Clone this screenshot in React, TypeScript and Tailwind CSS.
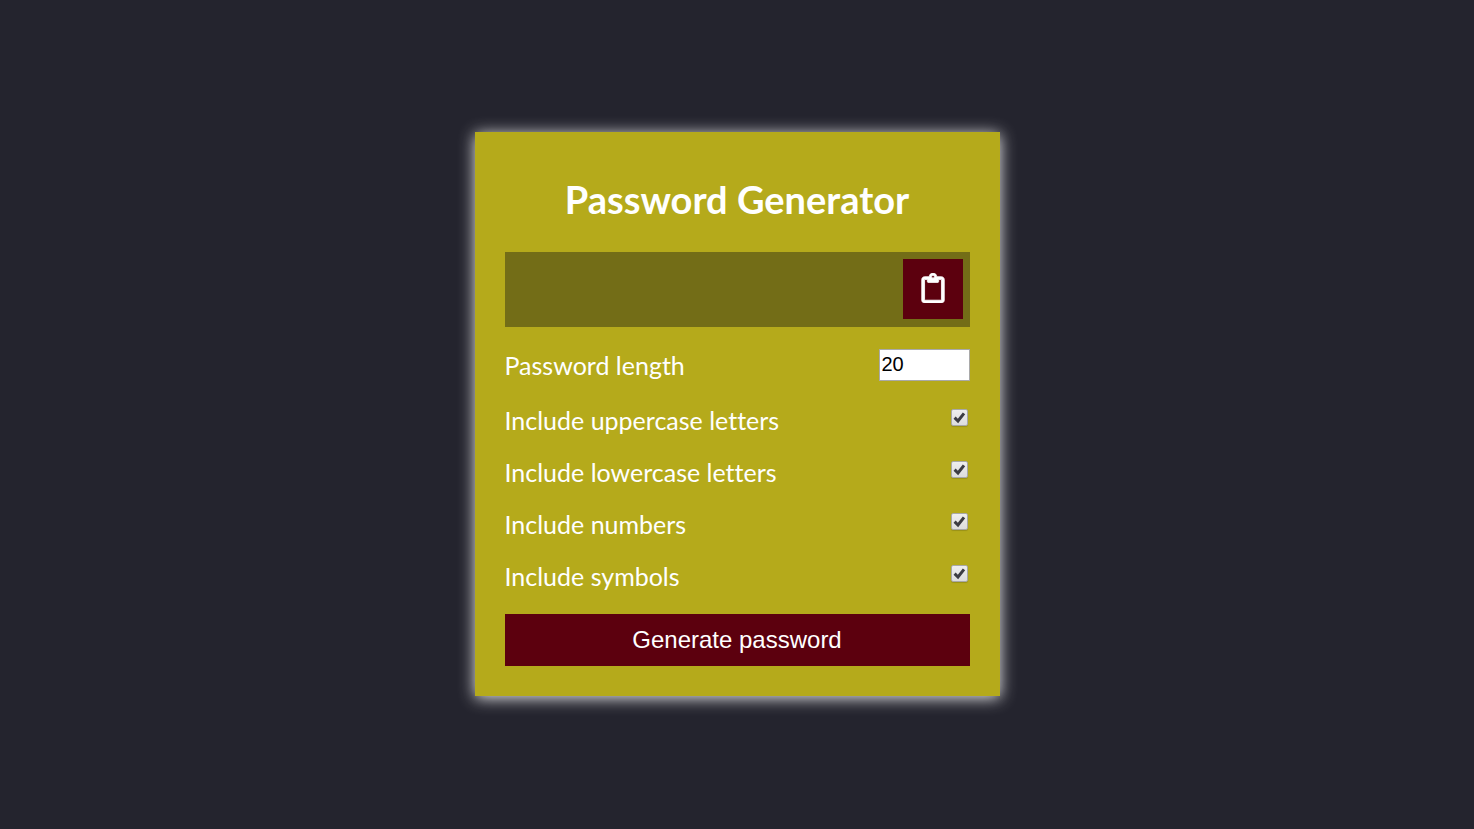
import { useState } from 'react';
import { FaRegClipboard } from 'react-icons/fa';

const options = [
  { id: 'uppercase', label: 'Include uppercase letters', chars: 'ABCDEFGHIJKLMNOPQRSTUVWXYZ' },
  { id: 'lowercase', label: 'Include lowercase letters', chars: 'abcdefghijklmnopqrstuvwxyz' },
  { id: 'numbers', label: 'Include numbers', chars: '0123456789' },
  { id: 'symbols', label: 'Include symbols', chars: '!@#$%^&*(){}[]=<>/,.' },
];

export default function App() {
  const [password, setPassword] = useState('');
  const [length, setLength] = useState(20);
  const [enabled, setEnabled] = useState<Record<string, boolean>>({
    uppercase: true,
    lowercase: true,
    numbers: true,
    symbols: true,
  });

  const generate = () => {
    const pool = options.filter((o) => enabled[o.id]).map((o) => o.chars).join('');
    setPassword(
      pool ? Array.from({ length }, () => pool[Math.floor(Math.random() * pool.length)]).join('') : '',
    );
  };

  return (
    <main className="flex min-h-screen items-center justify-center bg-[#24242e] pb-px font-['Lato','Open_Sans',sans-serif] text-[25px] leading-8 text-white [font-variant-ligatures:none]">
      <section className="w-full max-w-[525px] bg-[#b5aa1b] p-[30px] shadow-[0px_2px_15px_rgba(255,255,255,0.9)]">
        <h1 className="mt-3.5 mb-[30px] text-center text-[38px] leading-[46px] font-bold">Password Generator</h1>
        <div className="flex h-[75px] items-start justify-between bg-[#736d17] p-[7px]">
          <output className="min-w-0 flex-1 self-center overflow-hidden pl-2">{password}</output>
          <button
            type="button"
            aria-label="Copy password"
            onClick={() => navigator.clipboard?.writeText(password)}
            className="flex size-[60px] shrink-0 items-center justify-center bg-[#5c000e] pb-0.5"
          >
            <FaRegClipboard size={30} stroke="currentColor" strokeWidth={14} />
          </button>
        </div>
        <div className="mt-[22px] flex h-[31px] items-center justify-between">
          <label htmlFor="length">Password length</label>
          <input
            id="length"
            type="number"
            min={4}
            max={20}
            value={length}
            onChange={(e) => setLength(Number(e.target.value))}
            className="h-8 w-[91px] border border-[#a9a9a9] bg-white px-0.5 font-['Liberation_Sans',sans-serif] text-xl text-black"
          />
        </div>
        <div className="mt-[22px] mb-[25px] flex flex-col gap-[21px]">
          {options.map((o) => (
            <div key={o.id} className="flex h-[31px] items-center justify-between">
              <label htmlFor={o.id} className="pt-1">{o.label}</label>
              <span className="mr-[2px] grid place-items-center">
                <input
                  id={o.id}
                  type="checkbox"
                  checked={enabled[o.id]}
                  onChange={(e) => setEnabled({ ...enabled, [o.id]: e.target.checked })}
                  className="peer col-start-1 row-start-1 size-[17px] appearance-none rounded-xs border border-[#a8a8a8] bg-linear-to-b from-[#eeeeee] to-[#dddddd] shadow-[0_1px_1px_rgba(0,0,0,0.15)]"
                />
                <svg
                  viewBox="0 0 17 17"
                  className="pointer-events-none invisible col-start-1 row-start-1 size-[17px] peer-checked:visible"
                  aria-hidden="true"
                >
                  <path d="M3.6 8.6l3.4 3.4L13 4.4" fill="none" stroke="#3c3c43" strokeWidth="3" />
                </svg>
              </span>
            </div>
          ))}
        </div>
        <button
          type="button"
          onClick={generate}
          className="h-[52px] w-full bg-[#5c000e] font-['Liberation_Sans',sans-serif] text-2xl"
        >
          Generate password
        </button>
      </section>
    </main>
  );
}
